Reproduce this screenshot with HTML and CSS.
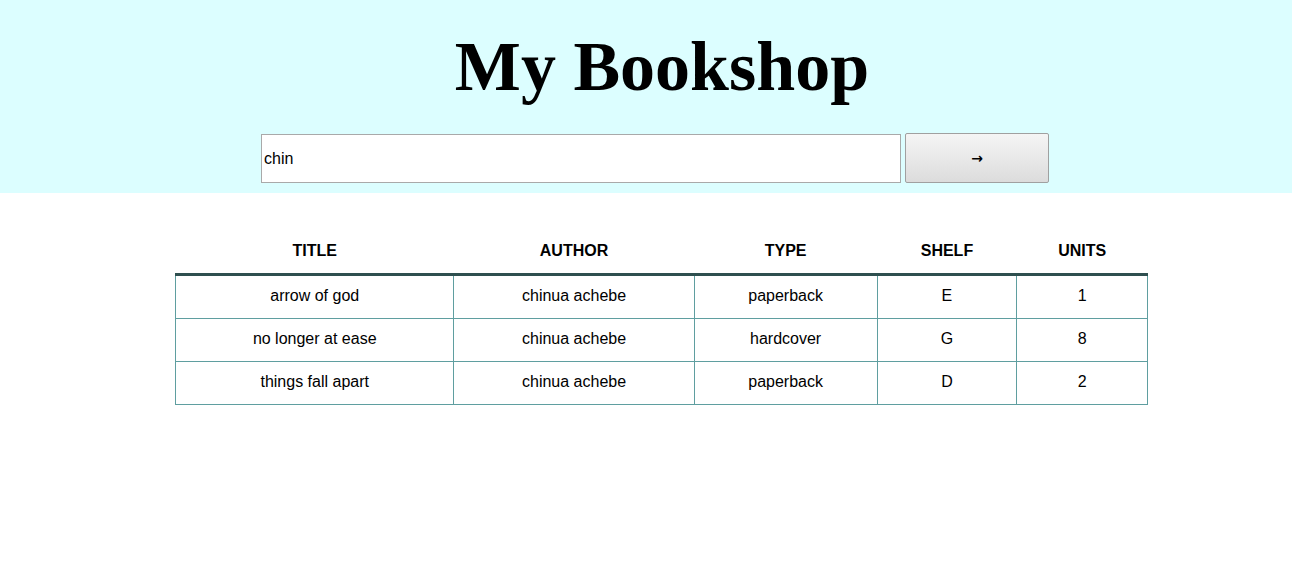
FILE: index.html
```html
<!DOCTYPE html>
<html>
<head>
<meta charset="utf-8">
<title>My Bookshop</title>
<link rel="stylesheet" href="styles.css">
</head>
<body>
<header class="top">
  <h1 class="brand">My Bookshop</h1>
  <form class="search">
    <input class="search-input" type="text" value="chin">
    <button class="search-btn" type="button">&rarr;</button>
  </form>
</header>
<main class="content">
  <table class="books">
    <thead>
      <tr>
        <th class="c-title">TITLE</th>
        <th class="c-author">AUTHOR</th>
        <th class="c-type">TYPE</th>
        <th class="c-shelf">SHELF</th>
        <th class="c-units">UNITS</th>
      </tr>
    </thead>
    <tbody>
      <tr><td>arrow of god</td><td>chinua achebe</td><td>paperback</td><td>E</td><td>1</td></tr>
      <tr><td>no longer at ease</td><td>chinua achebe</td><td>hardcover</td><td>G</td><td>8</td></tr>
      <tr><td>things fall apart</td><td>chinua achebe</td><td>paperback</td><td>D</td><td>2</td></tr>
    </tbody>
  </table>
</main>
</body>
</html>
```
FILE: styles.css
```css
html, body {
  margin: 0;
  padding: 0;
  background: #ffffff;
}
body {
  font-family: "Liberation Sans", Arial, sans-serif;
  font-size: 16px;
  color: #000;
}
.top {
  background: #dcfeff;
  height: 193px;
  box-sizing: border-box;
  padding-top: 27px;
}
.brand {
  margin: 0;
  font-family: "Liberation Serif", "Times New Roman", serif;
  font-weight: bold;
  font-size: 70px;
  line-height: 80px;
  text-align: center;
  padding-left: 32px;
}
.search {
  display: flex;
  justify-content: center;
  align-items: flex-end;
  gap: 4px;
  padding-left: 18px;
  margin-top: 26px;
}
.search-input {
  box-sizing: border-box;
  width: 640px;
  height: 49px;
  border: 1px solid #a9a9a9;
  padding: 0 2px;
  font-family: "Liberation Sans", Arial, sans-serif;
  font-size: 16px;
  background: #fff;
  color: #000;
  outline: none;
}
.search-btn {
  box-sizing: border-box;
  width: 144px;
  height: 50px;
  border: 1px solid #a0a0a0;
  border-radius: 2px;
  background: linear-gradient(#f5f5f5, #dcdcdc);
  font-family: "DejaVu Sans", sans-serif;
  font-size: 14px;
  font-weight: bold;
  color: #000;
  padding: 0;
}
.content {
  padding: 36px 0 0 175px;
}
.books {
  width: 973px;
  border-collapse: collapse;
  text-align: center;
}
.books th {
  font-weight: bold;
  height: 44px;
  padding: 0;
  vertical-align: middle;
  border-bottom: 3px solid #2f4f4f;
  line-height: 18px;
}
.books td {
  border: 1px solid #5f9ea0;
  height: 40px;
  padding: 0 0 2px;
  line-height: 18px;
  vertical-align: middle;
}
.c-title { width: 277px; }
.c-author { width: 239px; }
.c-type { width: 182px; }
.c-shelf { width: 139px; }
.c-units { width: 130px; }
```
